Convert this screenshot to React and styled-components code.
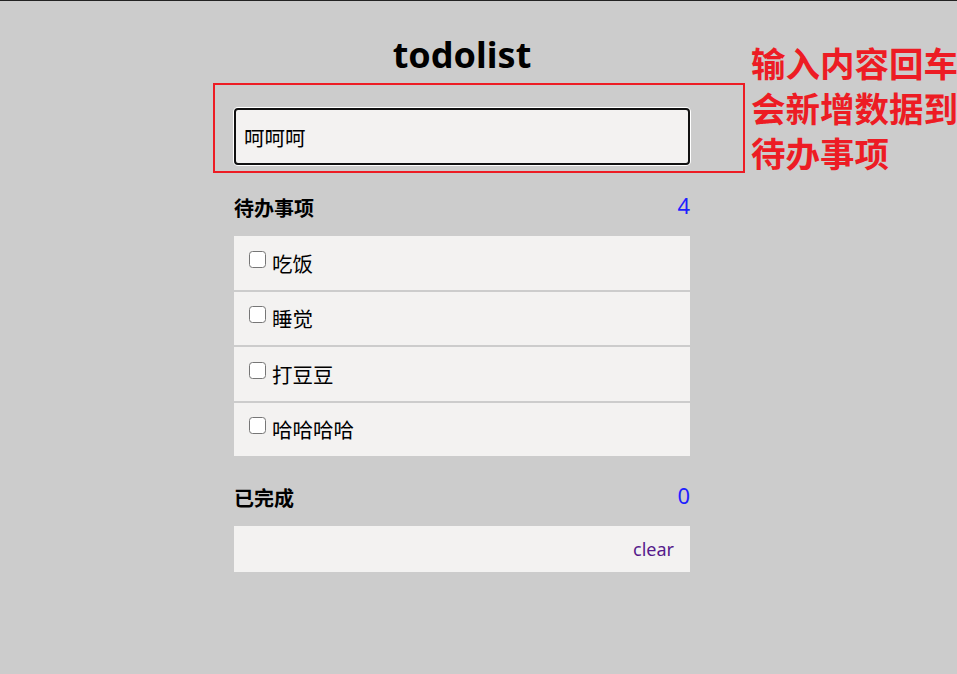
import React, { useState } from "react";
import styled, { createGlobalStyle } from "styled-components";

const GlobalStyle = createGlobalStyle`
  html, body {
    margin: 0;
    padding: 0;
    background: #cccccc;
    overflow: hidden;
  }
  body {
    font-family: "Noto Sans", "Noto Sans CJK SC", sans-serif;
    color: #000;
  }
`;

const todos = ["吃饭", "睡觉", "打豆豆", "哈哈哈哈"];
const noteLines = ["输入内容回车", "会新增数据到", "待办事项"];

const App = () => {
  const [text, setText] = useState("呵呵呵");

  return (
    <Page>
      <GlobalStyle />
      <Column>
        <Title>todolist</Title>
        <InputRow>
          <TodoInput
            type="text"
            value={text}
            autoFocus
            onChange={(e) => setText(e.target.value)}
          />
        </InputRow>

        <SectionHead>
          <span>待办事项</span>
          <Count>{todos.length}</Count>
        </SectionHead>
        <List>
          {todos.map((item) => (
            <Item key={item}>
              <Check type="checkbox" />
              <span>{item}</span>
            </Item>
          ))}
        </List>

        <SectionHead $gap={26}>
          <span>已完成</span>
          <Count>0</Count>
        </SectionHead>
        <Footer>
          <ClearLink href="#clear">clear</ClearLink>
        </Footer>
      </Column>

      {/* annotation drawn over the screenshot */}
      <Highlight />
      <Note>
        {noteLines.map((line) => (
          <NoteLine key={line}>{line}</NoteLine>
        ))}
      </Note>
    </Page>
  );
};

export default App;

const Page = styled.div`
  position: relative;
  width: 957px;
  height: 673px;
  border-top: 1px solid #222;
  background: #cccccc;
`;

const Column = styled.div`
  width: 456px;
  margin-left: 234px;
  display: flex;
  flex-direction: column;
`;

const Title = styled.h1`
  margin: 32px 0 0;
  font-size: 36px;
  line-height: 44px;
  font-weight: 700;
  text-align: center;
`;

const InputRow = styled.div`
  margin-top: 31px;
`;

const TodoInput = styled.input`
  box-sizing: border-box;
  width: 100%;
  height: 57px;
  padding: 0 8px;
  border: 2px solid #111;
  border-radius: 4px;
  background: #f3f2f1;
  box-shadow: 0 0 0 1px #ffffff;
  font-family: "Noto Sans CJK SC", sans-serif;
  font-size: 20.5px;
  color: #000;
  caret-color: #000;
  outline: none;
`;

const SectionHead = styled.div`
  margin-top: ${(p) => p.$gap || 27}px;
  height: 30px;
  display: flex;
  justify-content: space-between;
  align-items: center;
  font-size: 20px;
  font-weight: 700;
`;

const Count = styled.span`
  font-size: 22px;
  font-weight: 400;
  color: #1f1fff;
  margin-bottom: 4px;
`;

const List = styled.ul`
  list-style: none;
  margin: 14px 0 0;
  padding: 0;
  display: flex;
  flex-direction: column;
  gap: 2px;
`;

const Item = styled.li`
  height: 53.5px;
  display: flex;
  align-items: center;
  padding-left: 15px;
  background: #f3f2f1;
  font-size: 20.5px;
`;

const Check = styled.input`
  appearance: none;
  box-sizing: border-box;
  width: 17px;
  height: 17px;
  margin: 0 6px 7px 0;
  border: 1.5px solid #767676;
  border-radius: 3.5px;
  background: #fff;
  cursor: pointer;
`;

const Footer = styled.div`
  margin-top: 14px;
  height: 46px;
  display: flex;
  align-items: center;
  justify-content: flex-end;
  padding-right: 16px;
  background: #f3f2f1;
`;

const ClearLink = styled.a`
  font-size: 18px;
  color: #551a8b;
  text-decoration: none;
`;

const Highlight = styled.div`
  position: absolute;
  left: 213px;
  top: 82px;
  width: 532px;
  height: 90px;
  box-sizing: border-box;
  border: 2px solid #ed1c24;
  pointer-events: none;
`;

const Note = styled.div`
  position: absolute;
  left: 751px;
  top: 39px;
  display: flex;
  flex-direction: column;
  font-family: "Noto Sans CJK SC", sans-serif;
  font-size: 34.5px;
  font-weight: 700;
  color: #ed1c24;
  white-space: nowrap;
`;

const NoteLine = styled.div`
  height: 45px;
  line-height: 45px;
`;
